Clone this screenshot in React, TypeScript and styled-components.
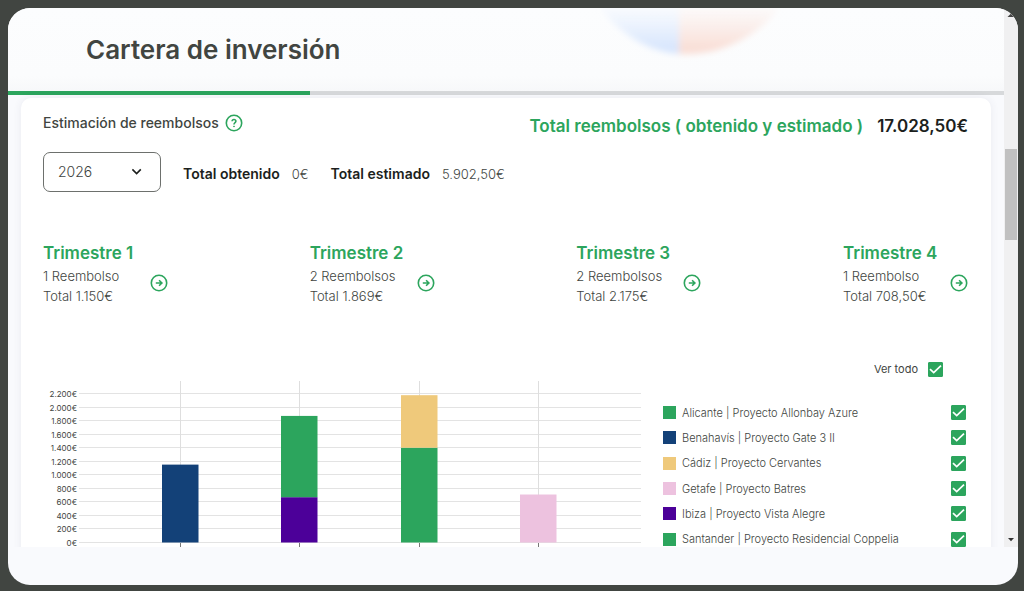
import React, { useState } from "react";
import styled, { createGlobalStyle } from "styled-components";

const green = "#2ca55d";

const GlobalStyle = createGlobalStyle`
  * { box-sizing: border-box; }
  body {
    margin: 0;
    background: #414541;
    color: #414541;
    font-family: Inter, "Liberation Sans", sans-serif;
  }
  h1, h2, h3, p, dl, dd, ul { margin: 0; padding: 0; }
`;

const Shell = styled.div`
  display: flex;
  flex-direction: column;
  height: calc(100vh - 14px);
  margin: 8px 6px 6px 8px;
  border-radius: 22px;
  overflow: hidden;
  background: #f9fafd;
`;

const Viewport = styled.div`
  display: flex;
  flex: 1;
  min-height: 0;
`;

const Page = styled.main`
  flex: 1;
  min-width: 0;
  overflow: hidden;
`;

const Footer = styled.footer`
  flex: none;
  height: 38px;
`;

const Header = styled.header`
  position: relative;
  overflow: hidden;
  height: 83px;
  padding: 24px 78px;
  background: linear-gradient(#fcfdfe 0, #fbfcfd 68px, #f7f8fa 83px);
`;

const HeaderGlow = styled.svg`
  position: absolute;
  top: 0;
  left: 58%;
  width: 220px;
  height: 60px;
`;

const Title = styled.h1`
  position: relative;
  font-size: 26px;
  line-height: 36px;
  font-weight: 600;
`;

const Progress = styled.div`
  height: 4px;
  background: #d7d9db;
`;

const ProgressFill = styled.div`
  height: 4px;
  background: ${green};
`;

const Card = styled.section`
  margin: 3px 13px 0;
  padding: 10px 23px 40px 22px;
  border-radius: 10px;
  background: #fff;
  box-shadow: 0 0 8px rgba(60, 70, 100, 0.08);
`;

const Row = styled.div`
  display: flex;
  align-items: center;
`;

const CardHead = styled(Row)`
  justify-content: space-between;
  height: 32px;
`;

const CardTitle = styled.h2`
  font-size: 14px;
  line-height: 20px;
  font-weight: 500;
`;

const IconButton = styled.button`
  display: block;
  width: 18px;
  height: 18px;
  padding: 0;
  border: 0;
  background: none;
  color: ${green};
  cursor: pointer;
  svg { display: block; }
`;

const HeadLeft = styled(Row)`
  gap: 6px;
  padding-bottom: 2px;
`;

const GrandTotal = styled.p`
  display: flex;
  gap: 14px;
  padding-top: 4px;
  font-size: 17px;
  line-height: 24px;
  font-weight: 600;
  color: #1c1f1d;
`;

const GreenText = styled.span`
  color: ${green};
`;

const Filters = styled(Row)`
  margin-top: 12px;
  gap: 22px;
`;

const SelectBox = styled.div`
  display: grid;
  align-items: center;
  width: 118px;
  svg {
    grid-area: 1 / 1;
    justify-self: end;
    margin-right: 18px;
    pointer-events: none;
  }
`;

const Select = styled.select`
  grid-area: 1 / 1;
  appearance: none;
  width: 100%;
  height: 40px;
  padding: 0 14px;
  border: 1px solid #6d706d;
  border-radius: 7px;
  background: #fff;
  color: #414541;
  font: 300 14px/20px Inter, sans-serif;
`;

const Totals = styled.dl`
  display: flex;
  gap: 22px;
  padding-top: 4px;
  font-size: 14px;
  line-height: 20px;
`;

const TotalItem = styled.div`
  display: flex;
  gap: 12px;
  dt { font-weight: 600; color: #1c1f1d; }
  dd { font-size: 13px; font-weight: 300; }
`;

const Quarters = styled.div`
  display: flex;
  justify-content: space-between;
  margin-top: 49px;
`;

const Quarter = styled.article`
  display: flex;
  align-items: center;
  justify-content: space-between;
  width: 125px;
  white-space: nowrap;
`;

const QuarterTitle = styled.h3`
  margin-bottom: 1px;
  font-size: 17px;
  line-height: 24px;
  font-weight: 600;
  color: ${green};
`;

const QuarterText = styled.p`
  font-size: 13px;
  line-height: 20px;
  font-weight: 300;
`;

const QuarterBody = styled.div`
  width: 107px;
`;

const QuarterAction = styled.div`
  padding-top: 19px;
`;

const Breakdown = styled.div`
  display: flex;
  gap: 16px;
  margin-top: 50px;
`;

const ChartBox = styled.div`
  flex: 1;
  min-width: 0;
  padding-top: 19px;
  svg { display: block; width: 100%; height: auto; }
`;

const AxisLabel = styled.text`
  font-size: 8px;
  text-anchor: end;
  fill: #414541;
`;

const Side = styled.div`
  width: 305px;
  padding-right: 2px;
`;

const AllLabel = styled.label`
  display: flex;
  align-items: center;
  justify-content: flex-end;
  gap: 10px;
  height: 26px;
  padding-right: 23px;
  font-size: 11px;
  line-height: 16px;
`;

const Legend = styled.ul`
  display: grid;
  grid-auto-rows: 1fr;
  height: 152px;
  margin-top: 18px;
  list-style: none;
`;

const LegendLabel = styled.label`
  display: flex;
  align-items: center;
  height: 100%;
  gap: 6px;
  font-size: 11px;
  line-height: 16px;
  font-weight: 300;
`;

const LegendName = styled.span`
  flex: 1;
`;

const Swatch = styled.span<{ $color: string }>`
  width: 13px;
  height: 13px;
  background: ${(p) => p.$color};
`;

const TickBox = styled.span`
  display: grid;
  width: 15px;
  height: 15px;
  svg { grid-area: 1 / 1; pointer-events: none; }
`;

const TickInput = styled.input`
  grid-area: 1 / 1;
  appearance: none;
  width: 15px;
  height: 15px;
  margin: 0;
  border: 1px solid ${green};
  border-radius: 1px;
  &:checked { background: ${green}; }
`;

const ScrollTrack = styled.div`
  display: flex;
  flex-direction: column;
  width: 14px;
  background: #f0f0f1;
`;

const ScrollArrow = styled.svg`
  display: block;
  width: 14px;
  height: 15px;
`;

const ScrollRail = styled.div`
  flex: 1;
  padding: 126px 1px 0;
`;

const ScrollThumb = styled.div`
  height: 91px;
  background: #c1c1c1;
`;

const HelpIcon = () => (
  <svg width="18" height="18" viewBox="0 0 18 18" fill="none" stroke="currentColor" strokeWidth="1.6" aria-hidden="true">
    <circle cx="9" cy="9" r="7.7" />
    <path d="M7.1 7.3C7.2 4.8 11 5 10.9 7.3 10.8 8.6 9 8.6 9 10.4" />
    <circle cx="9" cy="12.4" r="0.5" fill="currentColor" strokeWidth="0.8" />
  </svg>
);

const ArrowIcon = () => (
  <svg width="18" height="18" viewBox="0 0 18 18" fill="none" stroke="currentColor" strokeWidth="1.6" aria-hidden="true">
    <circle cx="9" cy="9" r="7.7" />
    <path d="M5.8 9H11.6M9.1 6.2L11.9 9L9.1 11.8" />
  </svg>
);

function Tick({ checked, onChange }: { checked: boolean; onChange: (v: boolean) => void }) {
  return (
    <TickBox>
      <TickInput type="checkbox" checked={checked} onChange={(e) => onChange(e.target.checked)} />
      {checked && (
        <svg width="15" height="15" viewBox="0 0 15 15" fill="none" stroke="#fff" strokeWidth="1.7" aria-hidden="true">
          <path d="M2 7.2L5.7 10.7L13 3.7" />
        </svg>
      )}
    </TickBox>
  );
}

const quarters = [
  { name: "Trimestre 1", count: "1 Reembolso", total: "Total 1.150€" },
  { name: "Trimestre 2", count: "2 Reembolsos", total: "Total 1.869€" },
  { name: "Trimestre 3", count: "2 Reembolsos", total: "Total 2.175€" },
  { name: "Trimestre 4", count: "1 Reembolso", total: "Total 708,50€" },
];

const projects = [
  { name: "Alicante | Proyecto Allonbay Azure", color: green },
  { name: "Benahavís | Proyecto Gate 3 II", color: "#134178" },
  { name: "Cádiz | Proyecto Cervantes", color: "#efc97b" },
  { name: "Getafe | Proyecto Batres", color: "#edc2df" },
  { name: "Ibiza | Proyecto Vista Alegre", color: "#4c0099" },
  { name: "Santander | Proyecto Residencial Coppelia", color: green },
];

// Each stack lists its segments from the axis upwards, in euros.
const stacks = [
  [{ project: 1, value: 1150 }],
  [{ project: 4, value: 669 }, { project: 5, value: 1200 }],
  [{ project: 0, value: 1400 }, { project: 2, value: 775 }],
  [{ project: 3, value: 708.5 }],
];

const ticks = ["0€", "200€", "400€", "600€", "800€", "1.000€", "1.200€", "1.400€", "1.600€", "1.800€", "2.000€", "2.200€"];
const baseY = 167.5;
const yOf = (value: number) => baseY - (value * 149) / 2200;
const gridY = (i: number) => Math.round(yOf(i * 200) - 0.5) + 0.5;
const centerX = (i: number) => Math.round(137 + i * 119.3) + 0.5;

function Chart({ visible }: { visible: boolean[] }) {
  return (
    <svg viewBox="0 0 604 172" role="img" aria-label="Reembolsos por trimestre">
      {ticks.map((label, i) => (
        <g key={label}>
          <path d={`M36 ${gridY(i)}H598`} stroke="#e3e3e3" />
          <AxisLabel x="34" y={gridY(i) + 3}>{label}</AxisLabel>
        </g>
      ))}
      {stacks.map((stack, i) => {
        let sum = 0;
        return (
          <g key={i}>
            <path d={`M${centerX(i)} 6V167`} stroke="#dedede" />
            <path d={`M${centerX(i)} 168V172`} stroke="#777" />
            {stack.filter((s) => visible[s.project]).map((s) => {
              const bottom = yOf(sum);
              sum += s.value;
              return (
                <rect
                  key={s.project}
                  x={centerX(i) - 18.5}
                  y={yOf(sum)}
                  width="36.5"
                  height={bottom - yOf(sum)}
                  fill={projects[s.project].color}
                />
              );
            })}
          </g>
        );
      })}
    </svg>
  );
}

export default function App() {
  const [visible, setVisible] = useState(projects.map(() => true));
  const [year, setYear] = useState("2026");

  return (
    <>
      <GlobalStyle />
      <Shell>
        <Viewport>
          <Page>
            <Header>
              <HeaderGlow viewBox="0 0 220 60" aria-hidden="true">
                <defs>
                  <filter id="soft" x="-20%" y="-20%" width="140%" height="140%">
                    <feGaussianBlur stdDeviation="3" />
                  </filter>
                  <linearGradient id="blue" x1="0" y1="0" x2="0" y2="50" gradientUnits="userSpaceOnUse">
                    <stop offset="0" stopColor="#dce9fd" stopOpacity="0.1" />
                    <stop offset="0.8" stopColor="#d8e6fd" />
                  </linearGradient>
                  <linearGradient id="coral" x1="0" y1="0" x2="0" y2="50" gradientUnits="userSpaceOnUse">
                    <stop offset="0" stopColor="#fae3dc" stopOpacity="0.1" />
                    <stop offset="0.8" stopColor="#f9dfd7" />
                  </linearGradient>
                </defs>
                <g filter="url(#soft)">
                  <path d="M12 -4C30 24 62 44 93 46V-4Z" fill="url(#blue)" />
                  <path d="M93 -4V46C133 49 174 28 196 -4Z" fill="url(#coral)" />
                </g>
              </HeaderGlow>
              <Title>Cartera de inversión</Title>
            </Header>
            <Progress>
              <ProgressFill style={{ width: "30.3%" }} />
            </Progress>
            <Card>
              <CardHead>
                <HeadLeft>
                  <CardTitle>Estimación de reembolsos</CardTitle>
                  <IconButton aria-label="Ayuda"><HelpIcon /></IconButton>
                </HeadLeft>
                <GrandTotal>
                  <GreenText>Total reembolsos ( obtenido y estimado )</GreenText>
                  <span>17.028,50€</span>
                </GrandTotal>
              </CardHead>
              <Filters>
                <SelectBox>
                  <Select aria-label="Año" value={year} onChange={(e) => setYear(e.target.value)}>
                    <option>2026</option>
                  </Select>
                  <svg width="12" height="12" viewBox="0 0 12 12" fill="none" stroke="#1c1f1d" strokeWidth="1.6" aria-hidden="true">
                    <path d="M1.4 3.4L5.6 7.6L9.8 3.4" />
                  </svg>
                </SelectBox>
                <Totals>
                  <TotalItem><dt>Total obtenido</dt><dd>0€</dd></TotalItem>
                  <TotalItem><dt>Total estimado</dt><dd>5.902,50€</dd></TotalItem>
                </Totals>
              </Filters>
              <Quarters>
                {quarters.map((q) => (
                  <Quarter key={q.name}>
                    <QuarterBody>
                      <QuarterTitle>{q.name}</QuarterTitle>
                      <QuarterText>{q.count}</QuarterText>
                      <QuarterText>{q.total}</QuarterText>
                    </QuarterBody>
                    <QuarterAction>
                      <IconButton aria-label={`Ver ${q.name}`}><ArrowIcon /></IconButton>
                    </QuarterAction>
                  </Quarter>
                ))}
              </Quarters>
              <Breakdown>
                <ChartBox><Chart visible={visible} /></ChartBox>
                <Side>
                  <AllLabel>
                    Ver todo
                    <Tick checked={visible.every(Boolean)} onChange={(v) => setVisible(projects.map(() => v))} />
                  </AllLabel>
                  <Legend>
                    {projects.map((p, i) => (
                      <li key={p.name}>
                        <LegendLabel>
                          <Swatch $color={p.color} />
                          <LegendName>{p.name}</LegendName>
                          <Tick
                            checked={visible[i]}
                            onChange={(v) => setVisible(visible.map((old, j) => (j === i ? v : old)))}
                          />
                        </LegendLabel>
                      </li>
                    ))}
                  </Legend>
                </Side>
              </Breakdown>
            </Card>
          </Page>
          <ScrollTrack aria-hidden="true">
            <ScrollArrow viewBox="0 0 14 15"><path d="M3.5 9L7 5.5L10.5 9Z" fill="#444" /></ScrollArrow>
            <ScrollRail><ScrollThumb /></ScrollRail>
            <ScrollArrow viewBox="0 0 14 15"><path d="M4 6L7 9.3L10 6Z" fill="#333" /></ScrollArrow>
          </ScrollTrack>
        </Viewport>
        <Footer />
      </Shell>
    </>
  );
}
